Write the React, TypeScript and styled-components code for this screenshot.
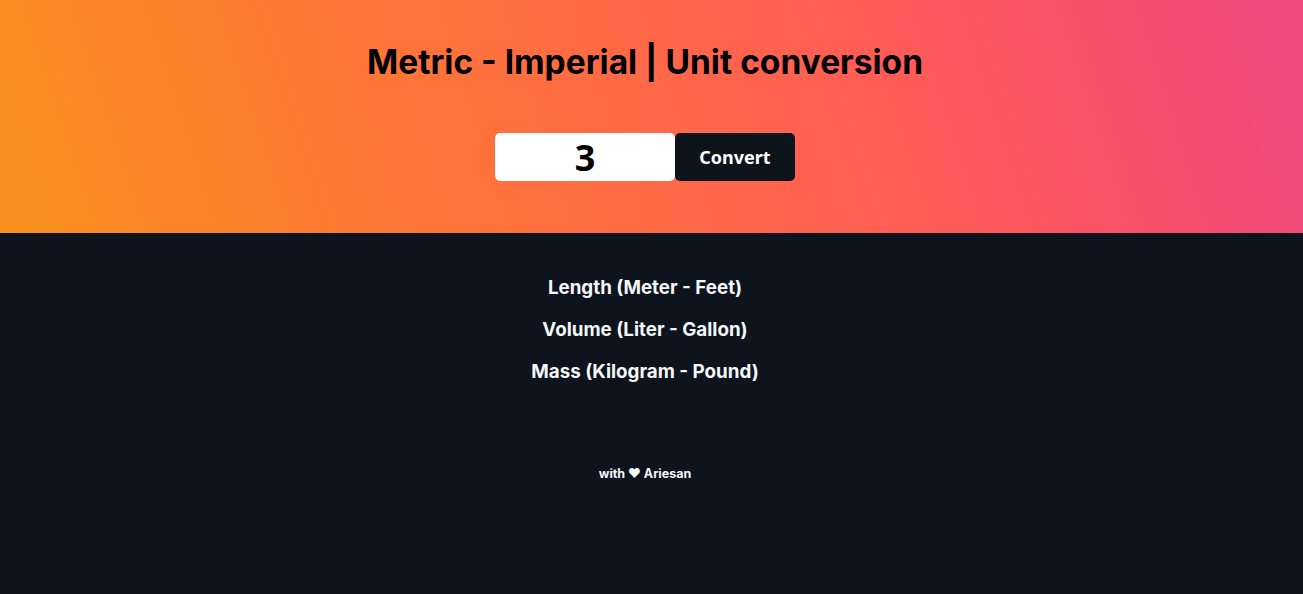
import React, { useState } from "react";
import styled, { createGlobalStyle } from "styled-components";

const Global = createGlobalStyle`
  html, body { margin: 0; padding: 0; background: #0d141d; }
  body { font-family: Inter, "Noto Sans", sans-serif; }
  * { box-sizing: border-box; }
`;

const Page = styled.div`
  min-height: 594px;
  background: #0d141d;
  display: flex;
  flex-direction: column;
`;

const Header = styled.header`
  height: 233px;
  background: linear-gradient(72deg, #f7911d 0%, #fd7a32 25%, #ff6c42 45%, #ff5c57 68%, #f44c6f 88%, #ee4a7e 100%);
  display: flex;
  flex-direction: column;
  align-items: center;
  padding: 40px 13px 0 0;
`;

const Title = styled.h1`
  margin: 0;
  font-family: Inter, Roboto, sans-serif;
  font-weight: 700;
  font-size: 33.5px;
  line-height: 44px;
  color: #000;
`;

const Form = styled.div`
  display: flex;
  margin-top: 49px;
`;

const Input = styled.input`
  width: 180px;
  height: 48px;
  border: none;
  border-radius: 5px;
  background: #fff;
  text-align: center;
  font-family: "Noto Sans", "Open Sans", sans-serif;
  font-weight: 700;
  font-size: 36px;
  color: #000;
  outline: none;
  padding: 0;
`;

const Button = styled.button`
  width: 120px;
  height: 48px;
  border: none;
  border-radius: 5px;
  background: #0e141c;
  color: #fff;
  font-family: "Noto Sans", "Open Sans", sans-serif;
  font-weight: 700;
  font-size: 18px;
  cursor: pointer;
`;

const Results = styled.section`
  display: flex;
  flex-direction: column;
  align-items: center;
  padding: 44px 13px 0 0;
  gap: 20px;
`;

const Result = styled.h2`
  margin: 0;
  font-family: Inter, sans-serif;
  font-weight: 700;
  font-size: 18.8px;
  line-height: 22px;
  color: #f4f6f8;
`;

const Footer = styled.footer`
  display: flex;
  justify-content: center;
  padding: 83px 13px 0 0;
  font-family: Inter, sans-serif;
  font-weight: 700;
  font-size: 12.5px;
  color: #f4f6f8;
`;

export default function App() {
  const [value, setValue] = useState("3");
  return (
    <Page>
      <Global />
      <Header>
        <Title>Metric - Imperial | Unit conversion</Title>
        <Form>
          <Input value={value} onChange={(e) => setValue(e.target.value)} />
          <Button>Convert</Button>
        </Form>
      </Header>
      <Results>
        <Result>Length (Meter - Feet)</Result>
        <Result>Volume (Liter - Gallon)</Result>
        <Result>Mass (Kilogram - Pound)</Result>
      </Results>
      <Footer>with ♥ Ariesan</Footer>
    </Page>
  );
}
